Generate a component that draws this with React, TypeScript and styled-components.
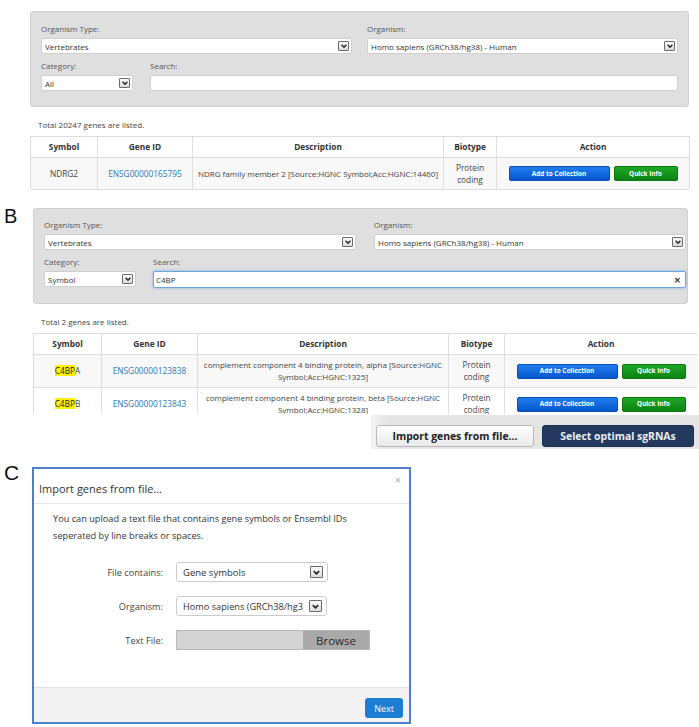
import React from 'react'
import styled, { createGlobalStyle } from 'styled-components'

const GlobalStyle = createGlobalStyle`
  html, body {
    margin: 0;
    padding: 0;
    background: #fff;
  }
  body {
    font-family: "Open Sans", "Liberation Sans", sans-serif;
    color: #333;
  }
  * {
    box-sizing: border-box;
  }
`

type Gene = {
  symbol: string
  highlight?: string
  id: string
  description: string[]
}

const panelAGenes: Gene[] = [
  { symbol: 'NDRG2', id: 'ENSG00000165795', description: ['NDRG family member 2 [Source:HGNC Symbol;Acc:HGNC:14460]'] },
]

const panelBGenes: Gene[] = [
  {
    symbol: 'A',
    highlight: 'C4BP',
    id: 'ENSG00000123838',
    description: ['complement component 4 binding protein, alpha [Source:HGNC', 'Symbol;Acc:HGNC:1325]'],
  },
  {
    symbol: 'B',
    highlight: 'C4BP',
    id: 'ENSG00000123843',
    description: ['complement component 4 binding protein, beta [Source:HGNC', 'Symbol;Acc:HGNC:1328]'],
  },
]

const Chevron = ({ size = 8 }: { size?: number }) => (
  <svg width={size} height={size} viewBox="0 0 10 10">
    <polyline points="2,3.5 5,6.5 8,3.5" fill="none" stroke="#222" strokeWidth="1.8" />
  </svg>
)

const FakeSelect = ({ value, small = true }: { value: string; small?: boolean }) => (
  <SelectBox $small={small}>
    <SelectText>{value}</SelectText>
    <ArrowBox $small={small}>
      <Chevron size={small ? 8 : 9} />
    </ArrowBox>
  </SelectBox>
)

const FilterPanel = (props: {
  width: number
  padTop: number
  padRight: number
  colGap: number
  category: string
  search: string
  focused?: boolean
}) => (
  <FilterBox $width={props.width} $padTop={props.padTop} $padRight={props.padRight} $colGap={props.colGap}>
    <Field>
      <Label>Organism Type:</Label>
      <FakeSelect value="Vertebrates" />
    </Field>
    <Field>
      <Label>Organism:</Label>
      <FakeSelect value="Homo sapiens (GRCh38/hg38) - Human" />
    </Field>
    <SearchRow>
      <Field $fixed={92}>
        <Label>Category:</Label>
        <FakeSelect value={props.category} />
      </Field>
      <Field>
        <Label>Search:</Label>
        <SearchInput $focused={!!props.focused}>
          <span>{props.search}</span>
          {props.focused && <ClearMark>✕</ClearMark>}
        </SearchInput>
      </Field>
    </SearchRow>
  </FilterBox>
)

const GeneTable = ({ genes, widths, rowHeight }: { genes: Gene[]; widths: number[]; rowHeight: number }) => {
  const total = widths.reduce((a, b) => a + b, 0)
  return (
    <Table $width={total}>
      <colgroup>
        {widths.map((w, i) => (
          <col key={i} style={{ width: w }} />
        ))}
      </colgroup>
      <thead>
        <tr>
          <th>Symbol</th>
          <th>Gene ID</th>
          <th>Description</th>
          <th>Biotype</th>
          <th>Action</th>
        </tr>
      </thead>
      <tbody>
        {genes.map((g, i) => (
          <BodyRow key={g.id} $h={rowHeight} $striped={i % 2 === 0}>
            <td>
              {g.highlight && <Mark>{g.highlight}</Mark>}
              {g.symbol}
            </td>
            <td>
              <GeneLink>{g.id}</GeneLink>
            </td>
            <DescCell>
              {g.description.map((line, j) => (
                <div key={j}>{line}</div>
              ))}
            </DescCell>
            <td>
              <div>Protein</div>
              <div>coding</div>
            </td>
            <td>
              <Actions>
                <ActionButton $tone="blue">Add to Collection</ActionButton>
                <ActionButton $tone="green">Quick Info</ActionButton>
              </Actions>
            </td>
          </BodyRow>
        ))}
      </tbody>
    </Table>
  )
}

const App = () => {
  return (
    <>
      <GlobalStyle />
      <Page>
        <Section $indent={30}>
          <div />
          <Column $width={659}>
            <FilterPanel width={659} padTop={10} padRight={10} colGap={15} category="All" search="" />
            <Total>Total 20247 genes are listed.</Total>
            <GeneTable genes={panelAGenes} widths={[67, 95, 251, 53, 193]} rowHeight={32} />
          </Column>
        </Section>

        <Section $indent={33}>
          <Letter $size={20} $shift={-2}>B</Letter>
          <Column $width={666}>
            <FilterPanel width={655} padTop={9} padRight={1} colGap={18} category="Symbol" search="C4BP" focused />
            <Total>Total 2 genes are listed.</Total>
            <TableClip>
              <GeneTable genes={panelBGenes} widths={[68, 96, 251, 56, 193]} rowHeight={33} />
            </TableClip>
            <ActionBar>
              <BarButton $dark={false} $width={158}>Import genes from file...</BarButton>
              <BarButton $dark $width={152}>Select optimal sgRNAs</BarButton>
            </ActionBar>
          </Column>
        </Section>

        <Section $indent={32}>
          <Letter $size={21} $shift={-5}>C</Letter>
          <Dialog>
            <DialogHeader>
              <DialogTitle>Import genes from file...</DialogTitle>
              <CloseMark>×</CloseMark>
            </DialogHeader>
            <DialogBody>
              <Intro>
                You can upload a text file that contains gene symbols or Ensembl IDs
                <br />
                seperated by line breaks or spaces.
              </Intro>
              <FormGrid>
                <FormLabel>File contains:</FormLabel>
                <DialogSelect $width={152}>
                  <SelectText>Gene symbols</SelectText>
                  <ArrowBox $small={false}>
                    <Chevron size={9} />
                  </ArrowBox>
                </DialogSelect>
                <FormLabel>Organism:</FormLabel>
                <DialogSelect $width={151}>
                  <TightText>Homo sapiens (GRCh38/hg3</TightText>
                  <ArrowBox $small={false}>
                    <Chevron size={9} />
                  </ArrowBox>
                </DialogSelect>
                <FormLabel>Text File:</FormLabel>
                <FileInput>
                  <FileBlank />
                  <Browse>Browse</Browse>
                </FileInput>
              </FormGrid>
            </DialogBody>
            <DialogFooter>
              <NextButton>Next</NextButton>
            </DialogFooter>
          </Dialog>
        </Section>
      </Page>
    </>
  )
}

const Page = styled.div`
  width: 699px;
  height: 727px;
  overflow: hidden;
  padding-top: 11px;
  display: flex;
  flex-direction: column;
  gap: 18px;
`

const Section = styled.section<{ $indent: number }>`
  display: grid;
  grid-template-columns: ${p => p.$indent}px auto;
  align-items: start;
`

const Letter = styled.div<{ $size: number; $shift: number }>`
  font-family: "Liberation Sans", Arial, sans-serif;
  font-size: ${p => p.$size}px;
  line-height: ${p => p.$size}px;
  margin-top: ${p => p.$shift}px;
  padding-left: 4px;
  color: #111;
`

const Column = styled.div<{ $width: number }>`
  width: ${p => p.$width}px;
  display: flex;
  flex-direction: column;
`

const FilterBox = styled.div<{ $width: number; $padTop: number; $padRight: number; $colGap: number }>`
  width: ${p => p.$width}px;
  background: #dfdfdf;
  border: 1px solid #d0d0d0;
  border-radius: 3px;
  padding: ${p => p.$padTop}px ${p => p.$padRight}px 15px 10px;
  display: grid;
  grid-template-columns: 1fr 1fr;
  column-gap: ${p => p.$colGap}px;
  row-gap: 5px;
`

const Field = styled.div<{ $fixed?: number }>`
  display: flex;
  flex-direction: column;
  min-width: 0;
  ${p => (p.$fixed ? `width: ${p.$fixed}px; flex: none;` : 'flex: 1;')}
`

const Label = styled.label`
  font-size: 8px;
  line-height: 13px;
  margin-bottom: 3px;
  color: #555;
`

const SearchRow = styled.div`
  grid-column: 1 / -1;
  display: flex;
  gap: 17px;
`

const SelectBox = styled.div<{ $small: boolean }>`
  display: flex;
  align-items: center;
  height: 16px;
  background: #fff;
  border: 1px solid #cfcfcf;
  border-radius: 2px;
  padding: 0 2px 0 3px;
  font-size: 8px;
  color: #333;
`

const SelectText = styled.span`
  flex: 1;
  min-width: 0;
  overflow: hidden;
  white-space: nowrap;
`

const TightText = styled.span`
  flex: 1;
  white-space: nowrap;
  font-size: 9.2px;
`

const ArrowBox = styled.span<{ $small: boolean }>`
  flex: none;
  width: ${p => (p.$small ? 11 : 13)}px;
  height: ${p => (p.$small ? 10 : 12)}px;
  border: 1px solid #6a6a6a;
  border-radius: 1px;
  background: linear-gradient(#fbfbfb, #dcdcdc);
  display: flex;
  align-items: center;
  justify-content: center;
`

const SearchInput = styled.div<{ $focused: boolean }>`
  display: flex;
  align-items: center;
  justify-content: space-between;
  height: ${p => (p.$focused ? 17 : 16)}px;
  background: #fff;
  border: 1px solid ${p => (p.$focused ? '#6aa6dc' : '#cfcfcf')};
  border-radius: 2px;
  box-shadow: ${p => (p.$focused ? '0 0 3px rgba(80, 150, 220, 0.7)' : 'none')};
  padding: 0 4px 0 2px;
  font-size: 8px;
  color: #333;
`

const ClearMark = styled.span`
  font-size: 8px;
  font-weight: 700;
  color: #333;
`

const Total = styled.div`
  font-size: 8px;
  line-height: 12px;
  color: #444;
  margin: 12px 0 5px 8px;
`

const Table = styled.table<{ $width: number }>`
  width: ${p => p.$width}px;
  border-collapse: collapse;
  table-layout: fixed;
  font-size: 8.3px;
  line-height: 12px;
  color: #444;
  th,
  td {
    border: 1px solid #dddddd;
    text-align: center;
    vertical-align: middle;
    padding: 0 3px;
    white-space: nowrap;
  }
  th {
    height: 21px;
    font-weight: 700;
    color: #333;
    background: #fff;
  }
`

const DescCell = styled.td`
  font-size: 8px;
`

const BodyRow = styled.tr<{ $h: number; $striped: boolean }>`
  height: ${p => p.$h}px;
  background: ${p => (p.$striped ? '#f8f8f8' : '#fff')};
`

const Mark = styled.span`
  background: #fff200;
  color: #222;
`

const GeneLink = styled.span`
  color: #2a78b8;
`

const Actions = styled.div`
  display: flex;
  justify-content: center;
  gap: 4px;
`

const ActionButton = styled.span<{ $tone: 'blue' | 'green' }>`
  display: inline-flex;
  align-items: center;
  justify-content: center;
  height: 15px;
  width: ${p => (p.$tone === 'blue' ? 101 : 64)}px;
  border-radius: 2px;
  font-size: 6.4px;
  font-weight: 700;
  color: #fff;
  background: ${p =>
    p.$tone === 'blue'
      ? 'linear-gradient(#1f7df0, #0757cc)'
      : 'linear-gradient(#1ea626, #0c8412)'};
  border: 1px solid ${p => (p.$tone === 'blue' ? '#0a4fb8' : '#0b7510')};
`

const TableClip = styled.div`
  width: 664px;
  height: 81px;
  overflow: hidden;
`

const ActionBar = styled.div`
  align-self: flex-end;
  width: 328px;
  margin-top: 1px;
  padding: 10px 5px 2px;
  display: flex;
  gap: 8px;
  background: linear-gradient(to right, #f3f3f3, #e5e5e5 5%, #e5e5e5);
`

const BarButton = styled.div<{ $dark: boolean; $width: number }>`
  width: ${p => p.$width}px;
  height: 22px;
  display: flex;
  align-items: center;
  justify-content: center;
  border-radius: 3px;
  font-size: 10.4px;
  font-weight: 700;
  color: ${p => (p.$dark ? '#e9eef6' : '#222')};
  background: ${p => (p.$dark ? '#233a5e' : 'linear-gradient(#ffffff, #e9e9e9)')};
  border: 1px solid ${p => (p.$dark ? '#1b2f4e' : '#b9b9b9')};
`

const Dialog = styled.div`
  width: 379px;
  height: 257px;
  border: 2px solid #4f7fc6;
  background: #fff;
  display: flex;
  flex-direction: column;
`

const DialogHeader = styled.div`
  height: 35px;
  flex: none;
  border-bottom: 1px solid #e6e6e6;
  display: flex;
  align-items: center;
  justify-content: space-between;
  padding: 4px 8px 0 5px;
`

const DialogTitle = styled.div`
  font-size: 11px;
  color: #333;
`

const CloseMark = styled.div`
  align-self: flex-start;
  margin-top: 1px;
  font-size: 11px;
  line-height: 11px;
  color: #aaa;
`

const DialogBody = styled.div`
  flex: 1;
  padding-top: 6px;
`

const Intro = styled.p`
  margin: 0;
  padding: 0 19px;
  font-size: 9.2px;
  line-height: 17px;
  color: #333;
`

const FormGrid = styled.div`
  margin-top: 18px;
  display: grid;
  grid-template-columns: 129px auto;
  column-gap: 13px;
  row-gap: 14px;
  align-items: center;
  justify-items: start;
`

const FormLabel = styled.div`
  justify-self: end;
  font-size: 9.2px;
  color: #444;
`

const DialogSelect = styled.div<{ $width: number }>`
  width: ${p => p.$width}px;
  height: 20px;
  display: flex;
  align-items: center;
  border: 1px solid #cccccc;
  border-radius: 3px;
  padding: 0 4px 0 6px;
  font-size: 9.5px;
  color: #333;
  background: #fff;
`

const FileInput = styled.div`
  width: 194px;
  height: 20px;
  display: flex;
  border: 1px solid #b8b8b8;
`

const FileBlank = styled.div`
  flex: 1;
  background: #d4d4d4;
`

const Browse = styled.div`
  width: 66px;
  display: flex;
  align-items: center;
  justify-content: center;
  background: #a9a9a9;
  font-size: 11.5px;
  color: #2a2a2a;
`

const DialogFooter = styled.div`
  height: 35px;
  flex: none;
  border-top: 1px solid #e3e3e3;
  background: #f3f3f3;
  display: flex;
  justify-content: flex-end;
  align-items: flex-start;
  padding: 10px 6px 0 0;
`

const NextButton = styled.div`
  width: 38px;
  height: 20px;
  border-radius: 3px;
  background: #1b7dd3;
  color: #fff;
  font-size: 9px;
  display: flex;
  align-items: center;
  justify-content: center;
`

export default App
